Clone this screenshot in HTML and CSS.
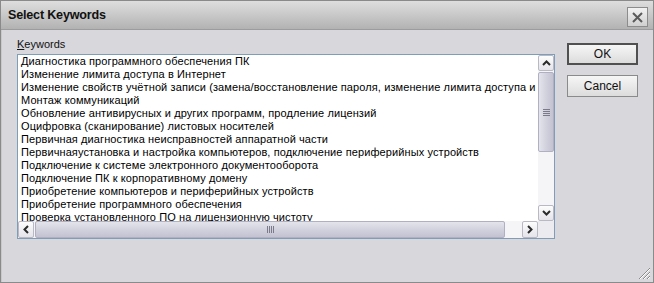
FILE: index.html
```html
<!DOCTYPE html>
<html>
<head>
<meta charset="utf-8">
<link rel="stylesheet" href="styles.css">
</head>
<body>
<div class="window">
  <div class="titlebar">
    <span class="title">Select Keywords</span>
    <button class="close" aria-label="Close">
      <svg width="13" height="13" viewBox="0 0 13 13"><path d="M2 2 L11 11 M11 2 L2 11" stroke="#5a5a5a" stroke-width="2" fill="none"/></svg>
    </button>
  </div>
  <div class="body">
    <div class="left">
      <div class="label"><u>K</u>eywords</div>
      <div class="listbox">
        <div class="items">
          <div class="item">Диагностика программного обеспечения ПК</div>
          <div class="item">Изменение лимита доступа в Интернет</div>
          <div class="item">Изменение свойств учётной записи (замена/восстановление пароля, изменение лимита доступа и т.д.)</div>
          <div class="item">Монтаж коммуникаций</div>
          <div class="item">Обновление антивирусных и других программ, продление лицензий</div>
          <div class="item">Оцифровка (сканирование) листовых носителей</div>
          <div class="item">Первичная диагностика неисправностей аппаратной части</div>
          <div class="item">Первичнаяустановка и настройка компьютеров, подключение периферийных устройств</div>
          <div class="item">Подключение к системе электронного документооборота</div>
          <div class="item">Подключение ПК к корпоративному домену</div>
          <div class="item">Приобретение компьютеров и периферийных устройств</div>
          <div class="item">Приобретение программного обеспечения</div>
          <div class="item">Проверка установленного ПО на лицензионную чистоту</div>
        </div>
        <div class="vscroll">
          <div class="sbtn"><svg width="9" height="6" viewBox="0 0 9 6"><path d="M1 5 L4.5 1.5 L8 5" stroke="#2b2b2b" stroke-width="2" fill="none"/></svg></div>
          <div class="vthumb"><span class="vgrip"></span></div>
          <div class="vtrack"></div>
          <div class="sbtn"><svg width="9" height="6" viewBox="0 0 9 6"><path d="M1 1 L4.5 4.5 L8 1" stroke="#2b2b2b" stroke-width="2" fill="none"/></svg></div>
        </div>
        <div class="hscroll">
          <div class="sbtn"><svg width="6" height="9" viewBox="0 0 6 9"><path d="M5 1 L1.5 4.5 L5 8" stroke="#2b2b2b" stroke-width="2" fill="none"/></svg></div>
          <div class="hthumb"><span class="hgrip"></span></div>
          <div class="htrack"></div>
          <div class="sbtn"><svg width="6" height="9" viewBox="0 0 6 9"><path d="M1 1 L4.5 4.5 L1 8" stroke="#2b2b2b" stroke-width="2" fill="none"/></svg></div>
        </div>
        <div class="corner"></div>
      </div>
    </div>
    <div class="buttons">
      <button class="btn default">OK</button>
      <button class="btn">Cancel</button>
    </div>
  </div>
  <svg class="grip" width="13" height="13" viewBox="0 0 13 13">
    <path d="M12 1 L1 12 M12 5 L5 12 M12 9 L9 12" stroke="#8a8a8a" stroke-width="1" fill="none"/>
    <path d="M12 2 L2 12 M12 6 L6 12 M12 10 L10 12" stroke="#ffffff" stroke-width="1" fill="none"/>
  </svg>
</div>
</body>
</html>
```
FILE: styles.css
```css
* { box-sizing: border-box; }
html, body { margin: 0; padding: 0; }
body {
  width: 654px;
  height: 283px;
  overflow: hidden;
  font-family: "Liberation Sans", Arial, sans-serif;
  font-size: 11px;
  color: #000;
}
.window {
  position: relative;
  width: 654px;
  height: 283px;
  border: 1px solid #8a8a8a;
  background: #d8d7dc;
  display: flex;
  flex-direction: column;
}
.titlebar {
  height: 29px;
  flex: none;
  background: linear-gradient(#dedede, #c4c4c4 60%, #b2b2b2);
  border-bottom: 1px solid #9c9c9c;
  display: flex;
  align-items: center;
  justify-content: space-between;
  padding: 0 5px 0 7px;
}
.title {
  font-family: "Liberation Sans", Arial, sans-serif;
  font-weight: bold;
  font-size: 12.6px;
  color: #111;
  letter-spacing: -0.2px;
}
.close {
  width: 21px;
  height: 20px;
  margin: 0;
  padding: 0;
  border: 1px solid #8c8c8c;
  background: linear-gradient(#f2f2f2, #d0d0d0);
  display: flex;
  align-items: center;
  justify-content: center;
  margin-top: 4px;
}
.body {
  flex: 1;
  display: flex;
  align-items: flex-start;
  padding: 8px 0 0 15px;
  border-left: 1px solid #c8c8c8;
}
.left {
  display: flex;
  flex-direction: column;
}
.label {
  height: 13px;
  line-height: 13px;
  margin-bottom: 3px;
  color: #111;
}
.listbox {
  width: 538px;
  height: 185px;
  border: 1px solid #7f9db9;
  background: #fff;
  display: grid;
  grid-template-columns: 520px 16px;
  grid-template-rows: 166px 17px;
}
.items {
  overflow: hidden;
  padding: 0 0 0 3px;
}
.item {
  height: 13px;
  line-height: 13px;
  white-space: nowrap;
  color: #000;
  letter-spacing: 0.1px;
}
.vscroll {
  display: flex;
  flex-direction: column;
  background: #f5f5f7;
}
.hscroll {
  display: flex;
  background: #f5f5f7;
}
.corner { background: #ecebef; }
.sbtn {
  flex: none;
  width: 16px;
  height: 16px;
  border: 1px solid #b9b9c6;
  border-radius: 2px;
  background: linear-gradient(#fdfdfd, #e4e4ea);
  display: flex;
  align-items: center;
  justify-content: center;
}
.hscroll .sbtn { height: 17px; }
.vthumb {
  height: 80px;
  margin-top: 1px;
  border: 1px solid #b0b0c2;
  border-radius: 2px;
  background: linear-gradient(90deg, #e4e4ec, #d2d2de 50%, #c2c2d2);
  display: flex;
  align-items: center;
  justify-content: center;
}
.vgrip {
  width: 7px;
  height: 7px;
  background: repeating-linear-gradient(#7a7a8a 0 1px, transparent 1px 2px);
}
.vtrack { flex: 1; }
.hthumb {
  width: 470px;
  margin-left: 1px;
  border: 1px solid #b0b0c2;
  border-radius: 2px;
  background: linear-gradient(#e4e4ec, #d2d2de 50%, #c2c2d2);
  display: flex;
  align-items: center;
  justify-content: center;
}
.hgrip {
  width: 7px;
  height: 7px;
  background: repeating-linear-gradient(90deg, #7a7a8a 0 1px, transparent 1px 2px);
}
.htrack { flex: 1; }
.buttons {
  display: flex;
  flex-direction: column;
  gap: 10px;
  margin-left: 12px;
  margin-top: 5px;
}
.btn {
  width: 71px;
  height: 22px;
  margin: 0;
  padding: 0;
  font-family: "Liberation Sans", Arial, sans-serif;
  font-size: 12px;
  color: #111;
  border: 1px solid #8a8a8a;
  background: linear-gradient(#f6f6f6, #dcdcdc);
}
.btn.default {
  border: 2px solid #505050;
}
.grip {
  position: absolute;
  right: 2px;
  bottom: 2px;
}
```
